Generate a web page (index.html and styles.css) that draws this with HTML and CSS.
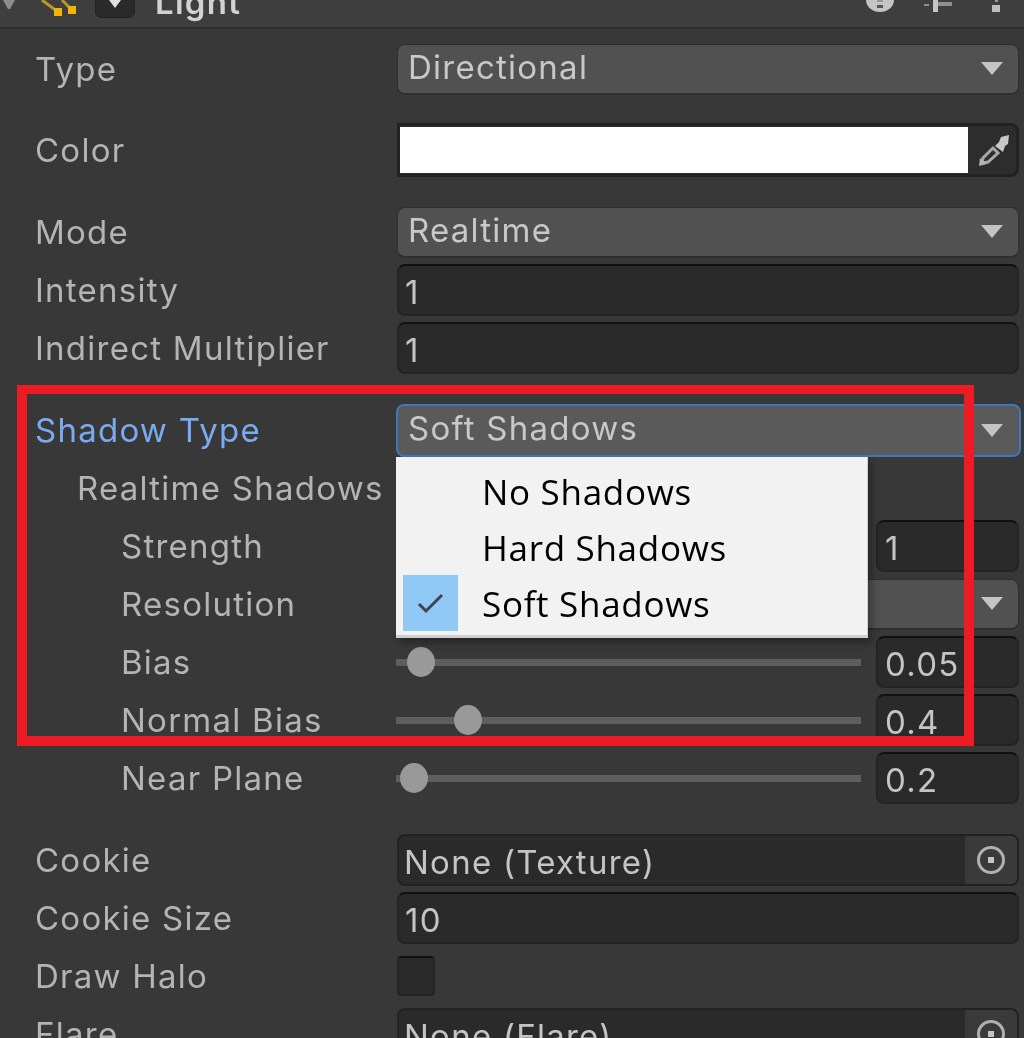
FILE: index.html
```html
<!DOCTYPE html>
<html lang="en">
<head>
<meta charset="utf-8">
<title>Light Inspector</title>
<link rel="stylesheet" href="styles.css">
</head>
<body>
<div class="page">
  <header class="header">
    <div class="header-inner">
      <svg class="foldout" width="12" height="9" viewBox="0 0 12 9"><path d="M0 0h12L7 9H5z" fill="#8c8c8c"/></svg>
      <svg class="light-icon" width="40" height="18" viewBox="0 0 40 18">
        <path d="M2 0l16 12" stroke="#b8972a" stroke-width="3" fill="none"/>
        <path d="M22 0l10 10" stroke="#b8972a" stroke-width="3" fill="none"/>
        <rect x="14" y="8" width="8" height="8" fill="#f2b400"/><rect x="28" y="6" width="8" height="8" fill="#f2b400"/>
      </svg>
      <span class="enable-box"><svg width="14" height="9" viewBox="0 0 14 9"><path d="M1 0h12L7 8z" fill="#e0e0e0"/></svg></span>
      <span class="title">Light</span>
      <span class="header-tools">
        <svg width="28" height="12" viewBox="0 0 28 12"><path d="M0 0h28a14 12 0 0 1-28 0z" fill="#c4c4c4"/><rect x="11" y="0" width="6" height="2" fill="#999"/><rect x="11" y="5" width="6" height="3" fill="#555"/></svg>
        <svg width="28" height="12" viewBox="0 0 28 12"><path d="M0 4h5v2H0zM14 2h14v4H14z" fill="#8f8f8f"/><rect x="9" y="0" width="5" height="12" fill="#c4c4c4"/></svg>
        <svg class="dots" width="8" height="12" viewBox="0 0 8 12"><rect x="3" y="0" width="3" height="2" fill="#999"/><rect x="0" y="5" width="8" height="7" fill="#bdbdbd"/></svg>
      </span>
    </div>
  </header>

  <main class="props">
    <div class="row"><span class="label">Type</span><div class="dropdown"><span>Directional</span><i class="arrow"></i></div></div>

    <div class="row section"><span class="label">Color</span>
      <div class="color-field"><span class="swatch"></span>
        <svg class="dropper" width="30" height="32" viewBox="0 0 30 32">
          <path d="M16 12l4-4 2-5 8-2-1 9-3 2-2 6z" fill="#c8c8c8"/>
          <path d="M14 14L4 24l-1 5 6-1 10-9z" stroke="#a8a8a8" stroke-width="3" fill="none"/>
          <path d="M0 32l1-8 7 6z" fill="#b4b4b4"/>
        </svg>
      </div>
    </div>

    <div class="row section"><span class="label">Mode</span><div class="dropdown"><span>Realtime</span><i class="arrow"></i></div></div>
    <div class="row"><span class="label">Intensity</span><div class="field">1</div></div>
    <div class="row"><span class="label">Indirect Multiplier</span><div class="field">1</div></div>

    <div class="row section"><span class="label active">Shadow Type</span>
      <div class="dropdown focused"><span>Soft Shadows</span><i class="arrow"></i>
        <ul class="menu">
          <li>No Shadows</li>
          <li>Hard Shadows</li>
          <li class="checked"><span class="check"><svg width="30" height="24" viewBox="0 0 30 24"><path d="M3 13l7 7L26 4" stroke="#3d4650" stroke-width="3" fill="none"/></svg></span>Soft Shadows</li>
        </ul>
      </div>
    </div>
    <div class="row"><span class="label indent1">Realtime Shadows</span></div>
    <div class="row"><span class="label indent2">Strength</span><div class="slider"><i class="track"></i></div><div class="field num">1</div></div>
    <div class="row"><span class="label indent2">Resolution</span><div class="dropdown"><span></span><i class="arrow"></i></div></div>
    <div class="row"><span class="label indent2">Bias</span><div class="slider"><i class="track"></i><i class="thumb" style="left:11px"></i></div><div class="field num">0.05</div></div>
    <div class="row"><span class="label indent2">Normal Bias</span><div class="slider"><i class="track"></i><i class="thumb" style="left:58px"></i></div><div class="field num">0.4</div></div>
    <div class="row"><span class="label indent2">Near Plane</span><div class="slider"><i class="track"></i><i class="thumb" style="left:4px"></i></div><div class="field num">0.2</div></div>

    <div class="row section"><span class="label">Cookie</span><div class="field object"><span>None (Texture)</span><span class="picker"><svg width="30" height="30" viewBox="0 0 30 30"><circle cx="15" cy="15" r="12.5" stroke="#b0b0b0" stroke-width="3" fill="none"/><rect x="12" y="12" width="6" height="6" fill="#c4c4c4"/></svg></span></div></div>
    <div class="row"><span class="label">Cookie Size</span><div class="field">10</div></div>
    <div class="row"><span class="label">Draw Halo</span><span class="checkbox"></span></div>
    <div class="row"><span class="label">Flare</span><div class="field object"><span>None (Flare)</span><span class="picker"><svg width="30" height="30" viewBox="0 0 30 30"><circle cx="15" cy="15" r="12.5" stroke="#b0b0b0" stroke-width="3" fill="none"/><rect x="12" y="12" width="6" height="6" fill="#c4c4c4"/></svg></span></div></div>
  </main>

  <div class="highlight"></div>
</div>
</body>
</html>
```
FILE: styles.css
```css
* { box-sizing: border-box; }
html, body { margin: 0; padding: 0; }
body { background: #383838; }
.page {
  position: relative;
  width: 1024px;
  height: 1038px;
  overflow: hidden;
  background: #383838;
  font-family: Inter, "Liberation Sans", sans-serif;
  font-size: 33px;
  letter-spacing: 1.25px;
  color: #c4c4c4;
  filter: blur(0.45px);
}
.header {
  height: 29px;
  background: #3e3e3e;
  border-bottom: 2px solid #2f2f2f;
  overflow: hidden;
}
.header-inner {
  display: flex;
  align-items: center;
  height: 50px;
  margin-top: -23px;
  padding-left: 3px;
  padding-right: 24px;
}
.foldout { align-self: flex-start; margin-top: 23px; }
.light-icon { align-self: flex-start; margin-top: 23px; margin-left: 25px; }
.enable-box {
  display: flex;
  justify-content: center;
  width: 40px;
  height: 42px;
  margin-left: 15px;
  background: #2a2a2a;
  border: 1px solid #222;
  border-radius: 6px;
  padding-top: 23px;
  align-self: flex-start;
  margin-top: -1px;
}
.title { margin-left: 20px; font-weight: 600; color: #d2d2d2; font-size: 33px; margin-top: -1px; }
.header-tools {
  display: flex;
  gap: 30px;
  align-self: flex-start;
  margin-left: auto;
  margin-top: 23px;
}
.dots { margin-left: 10px; }
.props { padding: 11px 5px 0 35px; }
.row {
  display: flex;
  align-items: center;
  height: 58px;
}
.section { margin-top: 24px; }
.row:nth-child(2) { margin-top: 23px; }
.label { flex: 0 0 362px; white-space: nowrap; color: #b4b4b4; }
.label.active { color: #7aaaf0; }
.indent1 { padding-left: 42px; }
.indent2 { padding-left: 86px; }
.dropdown {
  position: relative;
  flex: 1;
  display: flex;
  align-items: center;
  justify-content: space-between;
  height: 51px;
  padding: 0 15px 4px 10px;
  background: #515151;
  border: 1px solid #2f2f2f;
  border-bottom-width: 2px;
  border-radius: 8px;
  color: #c8c8c8;
}
.dropdown.focused {
  background: #5a5a5a;
  border: 2px solid #3a79bb;
  height: 53px;
  margin-left: -1px;
  margin-right: -2px;
  padding-left: 10px;
  padding-right: 16px;
}
.arrow {
  width: 0;
  height: 0;
  border-left: 11px solid transparent;
  border-right: 11px solid transparent;
  border-top: 13px solid #c4c4c4;
  margin-top: 4px;
}
.color-field {
  flex: 1;
  display: flex;
  align-items: center;
  height: 54px;
  background: #2d2d2d;
  border: 3px solid #222;
  border-radius: 0 8px 8px 0;
}
.swatch { width: 568px; height: 46px; background: #fff; }
.dropper { margin-left: 11px; }
.field {
  flex: 1;
  display: flex;
  align-items: center;
  height: 52px;
  padding: 4px 0 0 6px;
  background: #2a2a2a;
  border: 2px solid #232323;
  border-top-color: #111;
  border-radius: 8px;
}
.num { flex: 0 0 143px; padding-left: 7px; margin-left: 15px; }
.object {
  justify-content: space-between;
  padding: 0 0 0 5px;
  border-color: #222;
}
.object > span:first-child { padding-top: 3px; }
.picker {
  display: flex;
  align-items: center;
  justify-content: center;
  align-self: stretch;
  width: 52px;
  background: #3a3a3a;
  border-radius: 0 6px 6px 0;
}
.checkbox {
  width: 38px;
  height: 40px;
  background: #2a2a2a;
  border: 2px solid #232323;
  border-top-color: #111;
  border-radius: 4px;
}
.slider {
  position: relative;
  flex: 1;
  height: 30px;
  margin-left: -1px;
}
.track {
  position: absolute;
  left: 0;
  right: 0;
  top: 12px;
  height: 7px;
  background: #5e5e5e;
}
.thumb {
  position: absolute;
  top: 0;
  width: 28px;
  height: 30px;
  border-radius: 50%;
  background: #999;
}
.menu {
  position: absolute;
  left: -2px;
  top: 51px;
  z-index: 2;
  width: 472px;
  height: 181px;
  margin: 0;
  padding: 6px 5px;
  list-style: none;
  background: #f2f2f2;
  border-bottom: 3px solid #cfcfcf;
  border-right: 1px solid #cfcfcf;
  box-shadow: 4px 5px 7px rgba(0, 0, 0, .3);
  font-family: "Open Sans", "Noto Sans", sans-serif;
  font-size: 35px;
  letter-spacing: 0.7px;
  color: #000;
}
.menu li {
  position: relative;
  height: 56px;
  line-height: 58px;
  padding-left: 81px;
  white-space: nowrap;
}
.check {
  position: absolute;
  left: 2px;
  top: 0;
  width: 55px;
  height: 56px;
  display: flex;
  align-items: center;
  justify-content: center;
  background: #90c8f6;
}
.highlight {
  position: absolute;
  left: 17px;
  top: 385px;
  width: 957px;
  height: 361px;
  border: 10px solid #ed1c24;
  border-top-width: 9px;
  z-index: 3;
}
```
